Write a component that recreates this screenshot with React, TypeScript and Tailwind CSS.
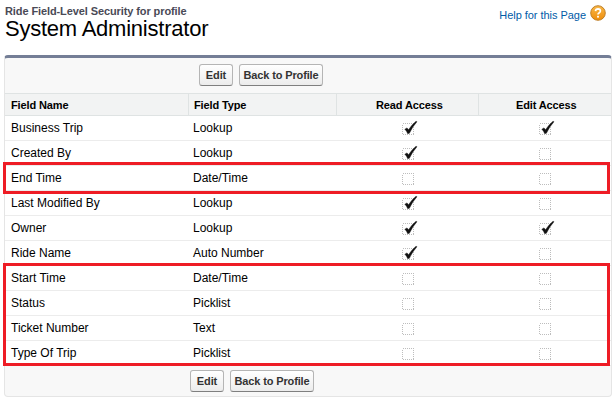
type Field = { name: string; type: string; read: boolean; edit: boolean };

const fields: Field[] = [
  { name: 'Business Trip', type: 'Lookup', read: true, edit: true },
  { name: 'Created By', type: 'Lookup', read: true, edit: false },
  { name: 'End Time', type: 'Date/Time', read: false, edit: false },
  { name: 'Last Modified By', type: 'Lookup', read: true, edit: false },
  { name: 'Owner', type: 'Lookup', read: true, edit: true },
  { name: 'Ride Name', type: 'Auto Number', read: true, edit: false },
  { name: 'Start Time', type: 'Date/Time', read: false, edit: false },
  { name: 'Status', type: 'Picklist', read: false, edit: false },
  { name: 'Ticket Number', type: 'Text', read: false, edit: false },
  { name: 'Type Of Trip', type: 'Picklist', read: false, edit: false },
];

const columns = 'grid grid-cols-[183px_148px_142px_131px]';

function Check({ checked, label }: { checked: boolean; label: string }) {
  return (
    <svg role="img" aria-label={label} className="block h-[16px] w-[16px]" viewBox="0 0 16 16">
      <rect
        x="0.5"
        y="3.5"
        width="11"
        height="11"
        fill="none"
        stroke="#bdbdbd"
        strokeDasharray="1 1"
        shapeRendering="crispEdges"
      />
      {checked && (
        <path
          d="M2.8 9.2 L4.9 7.9 Q6 8.6 6.5 9.8 Q9.5 4.8 14 1.2 L15 1.7 Q10 7.2 7.4 13.3 L5.7 13.7 Q4.7 10.8 2.8 9.2Z"
          fill="#111"
          stroke="#111"
          strokeWidth="0.4"
        />
      )}
    </svg>
  );
}

function Button({ label, width }: { label: string; width: string }) {
  return (
    <button
      className={`${width} h-[22px] rounded-[3px] border border-[#b5b5b5] border-b-[#7f7f7f] bg-linear-to-b from-white to-[#ececec] text-center text-[11px] leading-[21px] font-bold tracking-[-0.13px] whitespace-nowrap text-[#333]`}
    >
      {label}
    </button>
  );
}

function Buttons() {
  return (
    <>
      <Button label="Edit" width="w-[34px]" />
      <Button label="Back to Profile" width="w-[84px]" />
    </>
  );
}

export default function App() {
  return (
    <main className="h-[403px] w-[616px] overflow-hidden bg-white font-['Liberation_Sans',Arial,sans-serif] text-[12px] text-black">
      <header className="flex h-[55px] justify-between pl-[5px]">
        <div className="pt-[5px]">
          <p className="text-[11px] leading-[13px] font-bold tracking-[-0.1px] text-[#4a4a56]">
            Ride Field-Level Security for profile
          </p>
          <h1 className="text-[22px] leading-[22px] tracking-[-0.23px]">System Administrator</h1>
        </div>
        <a className="mr-[10px] flex h-[16px] items-start gap-[4px] pt-[5px] text-[11px] text-[#015ba7]">
          <span className="pt-[3px] leading-[14px] tracking-[-0.04px]">Help for this Page</span>
          <svg className="h-[16px] w-[16px]" viewBox="0 0 16 16">
            <defs>
              <linearGradient id="help" x1="0" y1="0" x2="0" y2="1">
                <stop offset="0" stopColor="#f8b84a" />
                <stop offset="1" stopColor="#ef8d0a" />
              </linearGradient>
            </defs>
            <circle cx="8" cy="8" r="7.3" fill="url(#help)" stroke="#b9781f" strokeWidth="0.9" />
            <path d="M5.5 6.1 Q5.7 3.9 8 3.9 Q10.4 4 10.4 6 Q10.3 7.2 9 7.9 Q8 8.5 8 9.6" fill="none" stroke="#fff" strokeWidth="1.7" />
            <rect x="7.1" y="10.8" width="1.8" height="1.8" fill="#fff" />
          </svg>
        </a>
      </header>

      <section className="relative ml-[4px] h-[342px] w-[608px] rounded-[4px] border-x border-t-[3px] border-b border-x-[#e5e5e5] border-t-[#747e96] border-b-[#e5e5e5] bg-[#f8f8f8]">
        <div className="flex h-[35px] gap-[6px] pt-[6px] pl-[194px]">
          <Buttons />
        </div>
        <div
          className={`${columns} h-[23px] border-y border-[#dfe3e3] bg-[#f2f3f3] text-[11px] leading-[22px] font-bold tracking-[-0.13px]`}
        >
          <div className="pl-[6px]">Field Name</div>
          <div className="border-l border-[#dfe3e3] pl-[5px]">Field Type</div>
          <div className="border-l border-[#dfe3e3] pl-[39px]">Read Access</div>
          <div className="border-l border-[#dfe3e3] pl-[37px]">Edit Access</div>
        </div>
        {fields.map((field) => (
          <div key={field.name} className={`${columns} h-[25px] border-b border-[#ececec] bg-white leading-[24px]`}>
            <div className="pl-[6px]">{field.name}</div>
            <div className="pl-[5px]">{field.type}</div>
            <div className="pt-[4px] pl-[66px]">
              <Check checked={field.read} label="Read access" />
            </div>
            <div className="pt-[4px] pl-[61px]">
              <Check checked={field.edit} label="Edit access" />
            </div>
          </div>
        ))}
        <div className="flex gap-[6px] pt-[4px] pl-[185px]">
          <Buttons />
        </div>

        <div className="absolute top-[104px] -left-[2px] h-[32px] w-[607px] border-[3px] border-[#ee1c25]" />
        <div className="absolute top-[205px] -left-[2px] h-[103px] w-[607px] border-[3px] border-[#ee1c25]" />
      </section>
    </main>
  );
}
